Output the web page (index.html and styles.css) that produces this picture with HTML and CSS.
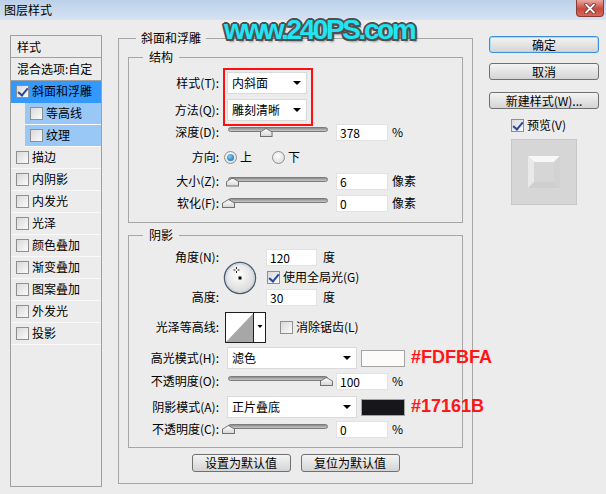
FILE: index.html
```html
<!doctype html>
<html lang="zh-CN">
  <head>
    <meta charset="UTF-8" />
    <meta name="viewport" content="width=device-width, initial-scale=1.0" />
    <title>图层样式</title>
    <link rel="stylesheet" href="styles.css">
  </head>
  <body>
    <div class="titlebar">
      <span class="title">图层样式</span>
      <span class="close-btn">
        <svg width="14" height="11" viewBox="0 0 14 11">
          <path d="M3 1.5l8 8M11 1.5l-8 8" stroke="#6b2a25" stroke-width="3.4" stroke-linecap="round"/>
          <path d="M3 1.5l8 8M11 1.5l-8 8" stroke="#ffffff" stroke-width="1.8" stroke-linecap="round"/>
        </svg>
      </span>
    </div>

    <div class="watermark">www.240PS.com</div>

    <div class="dialog">
      <!-- style list -->
      <div class="style-list">
        <div class="list-head">样式</div>
        <div class="list-blend">混合选项:自定</div>
        <div class="list-item selected"><span class="chk on"></span>斜面和浮雕</div>
        <div class="list-item sub"><span class="chk"></span>等高线</div>
        <div class="list-item sub"><span class="chk"></span>纹理</div>
        <div class="list-item"><span class="chk"></span>描边</div>
        <div class="list-item"><span class="chk"></span>内阴影</div>
        <div class="list-item"><span class="chk"></span>内发光</div>
        <div class="list-item"><span class="chk"></span>光泽</div>
        <div class="list-item"><span class="chk"></span>颜色叠加</div>
        <div class="list-item"><span class="chk"></span>渐变叠加</div>
        <div class="list-item"><span class="chk"></span>图案叠加</div>
        <div class="list-item"><span class="chk"></span>外发光</div>
        <div class="list-item"><span class="chk"></span>投影</div>
      </div>

      <!-- bevel & emboss settings -->
      <fieldset class="group bevel">
        <legend>斜面和浮雕</legend>

        <fieldset class="group structure">
          <legend>结构</legend>
          <div class="method-rows">
            <div class="row r-sel">
              <span class="lbl">样式(T):</span>
              <div class="select sel-short"><span>内斜面</span></div>
            </div>
            <div class="row r-sel r-sel2">
              <span class="lbl">方法(Q):</span>
              <div class="select sel-short"><span>雕刻清晰</span></div>
            </div>
            <div class="mark"></div>
          </div>
          <div class="row r-depth">
            <span class="lbl">深度(D):</span>
            <div class="slider"><div class="track"></div><span class="thumb" style="left: 37.8%"></span></div>
            <span class="num">378</span>
            <span class="unit">%</span>
          </div>
          <div class="row r-dir">
            <span class="lbl">方向:</span>
            <span class="radio on"></span><span class="radio-text">上</span>
            <span class="radio down"></span><span class="radio-text">下</span>
          </div>
          <div class="row r-size">
            <span class="lbl">大小(Z):</span>
            <div class="slider"><div class="track"></div><span class="thumb" style="left: 5%"></span></div>
            <span class="num">6</span>
            <span class="unit">像素</span>
          </div>
          <div class="row r-soft">
            <span class="lbl">软化(F):</span>
            <div class="slider"><div class="track"></div><span class="thumb" style="left: 1%"></span></div>
            <span class="num">0</span>
            <span class="unit">像素</span>
          </div>
        </fieldset>

        <fieldset class="group shading">
          <legend>阴影</legend>
          <div class="angle-block">
            <span class="lbl a-lbl1">角度(N):</span>
            <div class="dial">
              <svg width="34" height="34" viewBox="0 0 34 34">
                <defs>
                  <radialGradient id="dialFill" cx="45%" cy="40%" r="60%">
                    <stop offset="0" stop-color="#ffffff"/>
                    <stop offset="1" stop-color="#d8d8d8"/>
                  </radialGradient>
                </defs>
                <circle cx="17" cy="17" r="15.6" fill="url(#dialFill)" stroke="#4a5b70" stroke-width="1.3"/>
                <circle cx="17" cy="17" r="14.2" fill="none" stroke="#c9d1da" stroke-width="1"/>
                <rect x="15.5" y="15.5" width="3" height="3" fill="#000"/>
                <path d="M13.5 6v2M13.5 10v2M10.5 9h2M14.5 9h2" stroke="#222" stroke-width="1"/>
              </svg>
            </div>
            <div class="a-ctl1"><span class="num num-sm">120</span><span class="unit">度</span></div>
            <div class="a-ctl2"><span class="chk on"></span><span>使用全局光(G)</span></div>
            <span class="lbl a-lbl3">高度:</span>
            <div class="a-ctl3"><span class="num num-sm">30</span><span class="unit">度</span></div>
          </div>

          <div class="row r-contour">
            <span class="lbl">光泽等高线:</span>
            <div class="contour">
              <svg width="41" height="31" viewBox="0 0 41 31">
                <rect x="0.5" y="0.5" width="40" height="30" fill="#ffffff" stroke="#1e1e1e"/>
                <polygon points="1,30 28.5,1 28.5,30" fill="#a7a7a7"/>
                <line x1="28.5" y1="0" x2="28.5" y2="31" stroke="#1e1e1e"/>
                <polygon points="32.5,13 37.5,13 35,16" fill="#000"/>
              </svg>
            </div>
            <span class="chk aa-chk"></span><span>消除锯齿(L)</span>
          </div>

          <div class="row r-mode">
            <span class="lbl">高光模式(H):</span>
            <div class="select sel-long"><span>滤色</span></div>
            <span class="swatch" style="background-color: #fdfbfa"></span>
            <span class="hex">#FDFBFA</span>
          </div>
          <div class="row r-opac">
            <span class="lbl">不透明度(O):</span>
            <div class="slider"><div class="track"></div><span class="thumb" style="left: 97%"></span></div>
            <span class="num">100</span>
            <span class="unit">%</span>
          </div>
          <div class="row r-mode r-mode2">
            <span class="lbl">阴影模式(A):</span>
            <div class="select sel-long"><span>正片叠底</span></div>
            <span class="swatch" style="background-color: #17161b"></span>
            <span class="hex">#17161B</span>
          </div>
          <div class="row r-opac2">
            <span class="lbl">不透明度(C):</span>
            <div class="slider"><div class="track"></div><span class="thumb" style="left: 1%"></span></div>
            <span class="num">0</span>
            <span class="unit">%</span>
          </div>
        </fieldset>

        <div class="btn-row">
          <span class="btn">设置为默认值</span>
          <span class="btn">复位为默认值</span>
        </div>
      </fieldset>

      <!-- dialog buttons -->
      <div class="side">
        <span class="btn default">确定</span>
        <span class="btn btn-cancel">取消</span>
        <span class="btn btn-new">新建样式(W)...</span>
        <div class="preview-row"><span class="chk on"></span><span>预览(V)</span></div>
        <div class="preview">
          <svg width="64" height="64" viewBox="0 0 64 64">
            <polygon points="16,16 48,16 42,22 22,22" fill="#f7f7f7"/>
            <polygon points="16,16 22,22 22,42 16,48" fill="#e9e9e9"/>
            <polygon points="48,16 48,48 42,42 42,22" fill="#d2d2d2"/>
            <polygon points="16,48 22,42 42,42 48,48" fill="#cfcfcf"/>
          </svg>
        </div>
      </div>
    </div>
  </body>
</html>
```

FILE: styles.css
```css
* {
  box-sizing: border-box;
}
html,
body {
  margin: 0;
}
body {
  position: relative;
  width: 606px;
  height: 494px;
  overflow: hidden;
  background-color: #ececec;
  font-family: "Noto Sans CJK SC", "Liberation Sans", sans-serif;
  font-size: 12px;
  line-height: 1.2;
  color: #000;
}

/* title bar */
.titlebar {
  height: 20px;
  display: flex;
  justify-content: space-between;
  padding-left: 4px;
  background: linear-gradient(#bbd0e8, #d5e3f3);
}
.title {
  line-height: 20px;
}
.close-btn {
  width: 28px;
  height: 17px;
  margin-right: 2px;
  display: flex;
  align-items: center;
  justify-content: center;
  border: 1px solid #8a3b34;
  border-top: none;
  border-radius: 0 0 4px 4px;
  background: linear-gradient(#eaa89f, #c9493e 55%, #d5695c);
}

.watermark {
  position: absolute;
  left: 224px;
  top: 16px;
  z-index: 5;
  font-family: "Liberation Sans", Arial, sans-serif;
  font-weight: bold;
  font-size: 28px;
  line-height: 28px;
  letter-spacing: -2.4px;
  color: #23e4f3;
  text-shadow: 2px 0 #4f4f4f, -2px 0 #4f4f4f, 0 2px #4f4f4f, 0 -2px #4f4f4f,
    1.5px 1.5px #4f4f4f, -1.5px 1.5px #4f4f4f, 1.5px -1.5px #4f4f4f,
    -1.5px -1.5px #4f4f4f, 2px 3px 2px rgba(0, 0, 0, 0.35);
}

.dialog {
  display: flex;
  align-items: flex-start;
  padding-left: 10px;
}

/* left style list */
.style-list {
  width: 92px;
  height: 452px;
  margin-top: 15px;
  border: 1px solid #a0a0a0;
  flex: none;
}
.list-head {
  height: 22px;
  padding-left: 6px;
  line-height: 21px;
  border-bottom: 1px solid #a0a0a0;
}
.list-blend {
  height: 23px;
  padding-left: 6px;
  line-height: 22px;
  border-bottom: 1px solid #a0a0a0;
}
.list-item {
  height: 22px;
  display: flex;
  align-items: center;
  gap: 3px;
  padding-left: 5px;
  border-bottom: 1px solid #f9f9f9;
}
.list-item.selected {
  background-color: #3399ff;
  border-bottom-color: #3399ff;
}
.list-item.sub {
  margin-left: 14px;
  background-color: #99c8f7;
}

/* checkbox / radio */
.chk {
  position: relative;
  flex: none;
  width: 13px;
  height: 13px;
  border: 1px solid #8e8f8f;
  background: linear-gradient(135deg, #d9d9d9, #fbfbfb);
}
.chk.on::after {
  content: "";
  position: absolute;
  left: 3px;
  top: 0;
  width: 4px;
  height: 8px;
  border: solid #29489c;
  border-width: 0 2px 2px 0;
  transform: rotate(40deg);
}
.radio {
  position: relative;
  flex: none;
  width: 13px;
  height: 13px;
  border-radius: 50%;
  border: 1px solid #8e8f8f;
  background: radial-gradient(circle at 40% 35%, #ffffff, #d4d4d4);
}
.radio.on {
  margin-left: -3px;
}
.radio.on::after {
  content: "";
  position: absolute;
  left: 2px;
  top: 2px;
  width: 7px;
  height: 7px;
  border-radius: 50%;
  background: radial-gradient(circle at 40% 35%, #7fd0f7, #0b5ea8);
}
.radio.down {
  margin-left: 20px;
}
.radio-text {
  margin-left: 3px;
}

/* group boxes */
.group {
  margin: 0;
  padding: 0;
  min-width: 0;
  border: 1px solid #a6a6a6;
}
.group > legend {
  margin-left: 14px;
  padding: 0 6px;
  line-height: 16px;
}
.bevel {
  width: 355px;
  flex: none;
  margin: 10px 0 0 16px;
  padding: 3px 9px 11px 9px;
}
.bevel > legend {
  margin-left: 8px;
  padding: 0 5px;
}
.structure {
  padding-bottom: 8px;
}
.shading {
  margin-top: 4px;
  padding-bottom: 8px;
}

/* form rows */
.row {
  display: flex;
  align-items: center;
}
.row > * {
  flex-shrink: 0;
}
.lbl {
  flex: none;
  width: 91px;
  padding-right: 1px;
  margin-right: 7px;
  text-align: right;
}
.method-rows {
  position: relative;
  margin-top: 7px;
}
.mark {
  position: absolute;
  left: 94px;
  top: -4px;
  width: 90px;
  height: 58px;
  border: 2px solid #ff0f0f;
}
.r-sel {
  height: 22px;
}
.r-sel2 {
  margin-top: 5px;
}
.r-depth {
  height: 22px;
}
.r-dir {
  height: 28px;
}
.r-size {
  height: 21px;
}
.r-soft {
  height: 22px;
}

.select {
  display: flex;
  align-items: center;
  justify-content: space-between;
  height: 22px;
  padding: 0 5px 0 4px;
  background-color: #fff;
  border: 1px solid #dadada;
}
.select::after {
  content: "";
  border-left: 4px solid transparent;
  border-right: 4px solid transparent;
  border-top: 4px solid #000;
}
.sel-short {
  width: 80px;
}
.sel-long {
  width: 130px;
}

.num {
  width: 52px;
  height: 17px;
  margin-left: 7px;
  padding-left: 3px;
  line-height: 15px;
  background-color: #fff;
  border: 1px solid #e2e2e2;
}
.num-sm {
  width: 51px;
  margin-left: 0;
}
.unit {
  margin-left: 4px;
}

/* sliders */
.slider {
  position: relative;
  width: 102px;
  height: 14px;
  padding-top: 2px;
}
.track {
  height: 5px;
  margin: 0 1px;
  border: 1px solid #7a7a7a;
  border-radius: 3px;
  background: linear-gradient(#8c8c8c, #c9c9c9);
}
.thumb {
  position: absolute;
  top: 3px;
  width: 13px;
  height: 9px;
  margin-left: -6px;
}
.thumb::before,
.thumb::after {
  content: "";
  position: absolute;
  clip-path: polygon(0 45%, 50% 0, 100% 45%, 100% 100%, 0 100%);
}
.thumb::before {
  inset: 0;
  background-color: #707070;
}
.thumb::after {
  inset: 1px;
  background: linear-gradient(#ffffff, #d8d8d8);
}

/* shading */
.angle-block {
  display: grid;
  grid-template-columns: 91px 46px auto;
  grid-template-rows: 20px 21px 19px;
  align-items: center;
  margin-top: 4px;
}
.angle-block .lbl {
  margin-right: 0;
}
.a-lbl1 {
  grid-row: 1;
  grid-column: 1;
}
.a-lbl3 {
  grid-row: 3;
  grid-column: 1;
}
.dial {
  grid-row: 1 / 4;
  grid-column: 2;
  display: flex;
  padding-left: 3px;
  padding-top: 1px;
}
.a-ctl1,
.a-ctl2,
.a-ctl3 {
  grid-column: 3;
  display: flex;
  align-items: center;
}
.a-ctl1 .unit,
.a-ctl3 .unit {
  margin-left: 6px;
}
.a-ctl2 {
  gap: 3px;
  padding-left: 1px;
}
.r-contour {
  height: 31px;
  margin-top: 5px;
}
.contour {
  display: flex;
  margin-left: -2px;
}
.aa-chk {
  margin: 0 3px 0 14px;
}
.r-mode {
  height: 22px;
  margin-top: 4px;
}
.r-mode2 {
  margin-top: 5px;
}
.r-opac {
  height: 20px;
  margin-top: 2px;
}
.r-opac2 {
  height: 20px;
  margin-top: 1px;
}
.swatch {
  width: 44px;
  height: 17px;
  margin-left: 4px;
  border: 1px solid #a3a3a3;
}
.hex {
  margin-left: 6px;
  font-family: "Liberation Sans", Arial, sans-serif;
  font-weight: bold;
  font-size: 18px;
  color: #ff1616;
}

/* buttons */
.btn {
  display: flex;
  align-items: center;
  justify-content: center;
  height: 17px;
  border: 1px solid #707070;
  border-radius: 3px;
  background: linear-gradient(#f4f4f4, #e4e4e4 50%, #d4d4d4);
  line-height: 1;
}
.btn.default {
  border-color: #3a8fd8;
  box-shadow: inset 0 0 0 1px #a7dcf8;
}
.btn-row {
  display: flex;
  justify-content: center;
  gap: 10px;
  margin-top: 6px;
}
.btn-row .btn {
  width: 99px;
  height: 18px;
}

.side {
  width: 110px;
  flex: none;
  margin: 16px 0 0 16px;
  display: flex;
  flex-direction: column;
}
.btn-cancel {
  margin-top: 10px;
}
.btn-new {
  margin-top: 12px;
}
.preview-row {
  display: flex;
  align-items: center;
  gap: 3px;
  height: 13px;
  margin-top: 10px;
  padding-left: 22px;
}
.preview {
  width: 66px;
  height: 66px;
  margin: 7px 0 0 22px;
  border: 1px solid #c6c6c6;
  background-color: #d6d6d6;
}
```
